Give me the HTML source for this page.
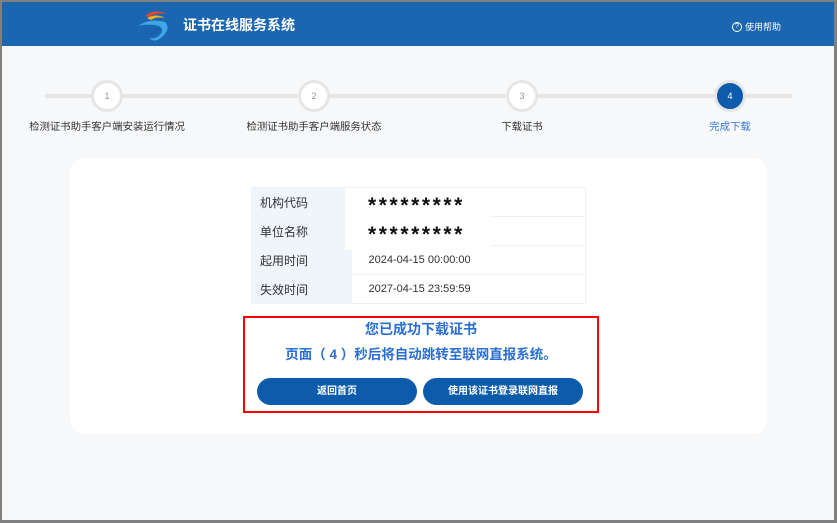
<!DOCTYPE html>
<html><head><meta charset="utf-8"><style>
*{margin:0;padding:0;box-sizing:border-box}
body{width:837px;height:523px;overflow:hidden;background:#808080;font-family:"Liberation Sans","Noto Sans CJK SC",sans-serif;position:relative}
.wrap{position:absolute;left:2px;top:2px;width:832px;height:518px;background:#f7f8fa}
.hdr{position:absolute;left:0;top:0;width:832px;height:44px;background:#1a66b0}
.abs{position:absolute}
.line{position:absolute;left:43px;top:92px;width:747px;height:4px;background:#e6e6e6}
.c{position:absolute;width:32px;height:32px;border-radius:50%;background:#fff;border:3px solid #e6e6e6;font-size:9px;color:#999;text-align:center;line-height:26px;top:78px}
.lbl{position:absolute;top:116px;font-size:10.4px;color:#333;white-space:nowrap;transform:translateX(-50%)}
.card{position:absolute;left:68px;top:156px;width:697px;height:276px;background:#fff;border-radius:14px}
table{position:absolute;left:249px;top:185px;width:335px;border-collapse:collapse;font-size:11px;color:#333;border:1px solid #eef1f5}
td{height:29px;border-bottom:1px solid #eef1f5}
td.k{width:100px;background:#f0f5fb;padding-left:8px;font-size:12px}
td.v{padding-left:17px}
.btn{position:absolute;top:376px;width:160px;height:27px;border-radius:14px;background:#0d5bab;color:#fff;font-size:10px;font-weight:bold;text-align:center;line-height:27px}
.ast{position:absolute;left:366px;font-size:21px;font-weight:bold;color:#111;letter-spacing:2.6px}
</style></head><body><div class="wrap">
<div class="hdr">
<svg class="abs" style="left:133px;top:6px" width="40" height="36" viewBox="0 0 40 36"><path d="M10 8 Q20 0 32 6 Q22 4 14 9Z" fill="#e8452c"/><path d="M12 10 Q22 5 30 10 Q22 8 16 12Z" fill="#f2b21b"/><path d="M3 18 Q14 10 30 14 Q36 20 28 28 Q20 36 14 30 Q22 32 27 24 Q28 18 20 17 Q10 16 3 18Z" fill="#3fa6e8"/><path d="M14 28 Q16 20 26 20 Q22 26 14 28Z" fill="#1c5fae"/></svg>
<div class="abs" style="left:181px;top:13px;color:#fff;font-size:14px;font-weight:bold">证书在线服务系统</div>
<div class="abs" style="left:730px;top:18px;color:#fff;font-size:9px;display:flex;align-items:center;gap:3px"><span style="display:inline-block;width:10px;height:10px;border:1px solid #fff;border-radius:50%;font-size:7px;line-height:8px;text-align:center">?</span>使用帮助</div>
</div>
<div class="line"></div>
<div class="c" style="left:89px">1</div>
<div class="c" style="left:296px">2</div>
<div class="c" style="left:504px">3</div>
<div class="c" style="left:712px;background:#0d5bab;color:#fff">4</div>
<div class="lbl" style="left:105px">检测证书助手客户端安装运行情况</div>
<div class="lbl" style="left:312px">检测证书助手客户端服务状态</div>
<div class="lbl" style="left:520px">下载证书</div>
<div class="lbl" style="left:728px;color:#3a78d6">完成下载</div>
<div class="card"></div>
<table>
<tr><td class="k">机构代码</td><td class="v"></td></tr>
<tr><td class="k">单位名称</td><td class="v"></td></tr>
<tr><td class="k">起用时间</td><td class="v">2024-04-15 00:00:00</td></tr>
<tr><td class="k">失效时间</td><td class="v">2027-04-15 23:59:59</td></tr>
</table>
<div class="abs" style="left:343px;top:186px;width:146px;height:62px;background:#fff"></div>
<div class="ast" style="top:192px">*********</div>
<div class="ast" style="top:221px">*********</div>
<div class="abs" style="left:241px;top:314px;width:356px;height:97px;border:2px solid #f00"></div>
<div class="abs" style="left:241px;top:317px;width:356px;text-align:center;color:#2a6fd0;font-size:14px;font-weight:bold">您已成功下载证书</div>
<div class="abs" style="left:241px;top:341px;width:356px;text-align:center;color:#2a6fd0;font-size:13.5px;font-weight:bold">页面（ 4 ）秒后将自动跳转至联网直报系统。</div>
<div class="btn" style="left:255px">返回首页</div>
<div class="btn" style="left:421px">使用该证书登录联网直报</div>
</div></body></html>
